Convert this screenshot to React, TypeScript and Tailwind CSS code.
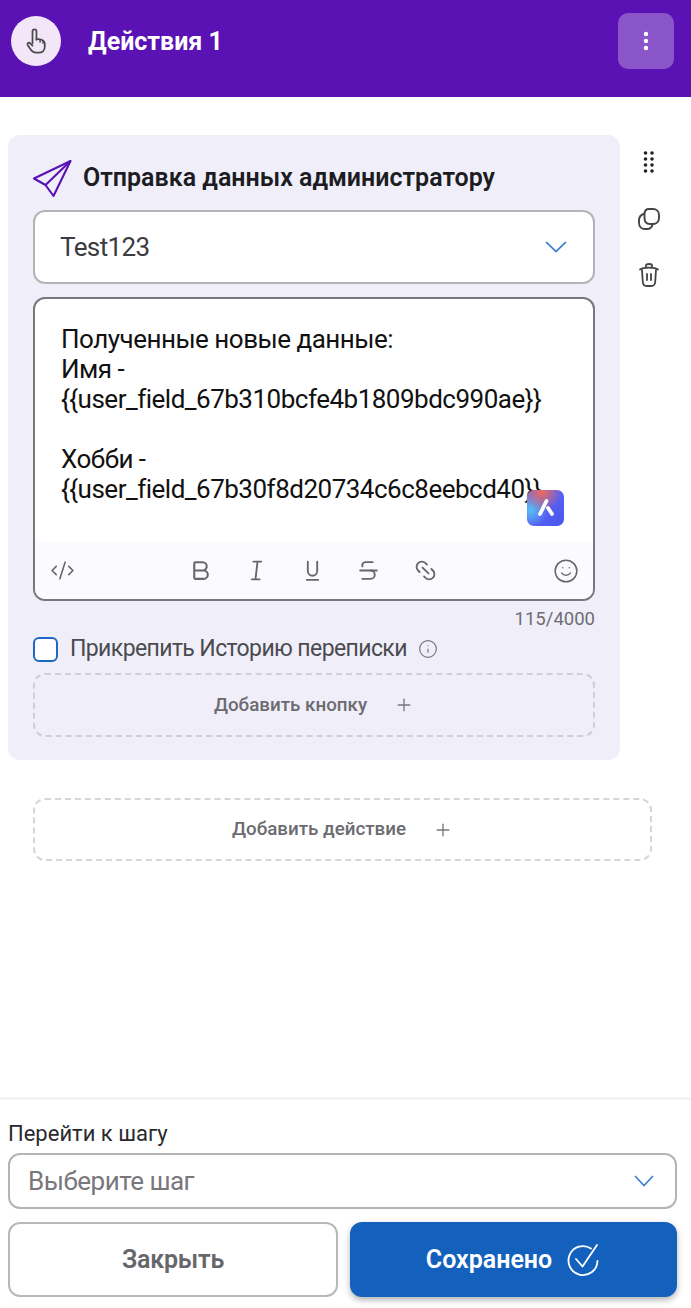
import React from 'react'
import { Plus, MoreVertical, CodeXml, Bold, Strikethrough, Link2, Smile, Info } from 'lucide-react'

function GripDots() {
    return (
        <svg width="14" height="24" viewBox="0 0 14 24" fill="#222">
            {[2, 8, 14, 20].map((y) => (
                <g key={y}>
                    <circle cx="3.5" cy={y} r="1.8" />
                    <circle cx="10" cy={y} r="1.8" />
                </g>
            ))}
        </svg>
    )
}

function Chevron({ width }: { width: number }) {
    return (
        <svg width={width} height="12" viewBox="0 0 20 12" fill="none" stroke="#3a7fd0" strokeWidth="1.7" preserveAspectRatio="none" className="ml-auto">
            <path d="M1 1 L10 10.5 L19 1" />
        </svg>
    )
}

function HandIcon() {
    return (
        <svg width="28" height="28" viewBox="0 0 24 24" fill="none" stroke="#4a4a4a" strokeWidth="1.5" strokeLinecap="round" strokeLinejoin="round">
            <path d="M9 14V3.7a1.7 1.7 0 0 1 3.4 0V11" />
            <path d="M12.4 10.5c2.5-.6 6.8.6 7.1 3.5v3c0 3-2 5-5 5h-2.2c-2.8 0-4.3-1.4-5.3-3.4L4.8 15.4c-.6-1.3 1-2.6 2.3-1.4L9 16" />
            <path d="M15.5 11v2M18 12v2" strokeWidth="1.2" />
        </svg>
    )
}

function PlaneIcon() {
    return (
        <svg width="40" height="40" viewBox="0 0 40 40" fill="none" stroke="#5a12b4" strokeWidth="2.1" strokeLinejoin="round" className="shrink-0 -ml-[1px]">
            <path d="M38.5 3 L2 20.5 L13.5 27 L21.5 38 Z" />
            <path d="M38.5 3 L13.5 27" />
        </svg>
    )
}

function CopyIcon() {
    return (
        <svg width="24" height="24" viewBox="0 0 24 24" fill="none" stroke="#444" strokeWidth="1.9" strokeLinejoin="round" className="mt-[32px]">
            <path d="M12 2h4c3.500 0 6 2.500 6 6v3c0 3.500-2.500 6-6 6h-3c-3.500 0-5.500-2.500-5.500-6V7c0-3 1.500-5 4.500-5z" />
            <path d="M7.600 6.500C4 7.500 2 10 2 13.500V16c0 3.500 2.500 6 6 6h2c2.800 0 5-1.600 5.800-5" />
        </svg>
    )
}

function TrashIcon() {
    return (
        <svg width="24" height="26" viewBox="0 0 24 26" fill="none" stroke="#444" strokeWidth="1.8" strokeLinecap="round" strokeLinejoin="round" className="mt-[31px]">
            <path d="M3 7.500c3-2.500 15-2.500 18 0" />
            <path d="M9 5V3.500c0-1 1-1.500 3-1.500s3 .5 3 1.500V5" />
            <path d="M5 8l.8 12c.2 2.500 1.700 4 4 4h4.400c2.300 0 3.800-1.500 4-4L19 8" />
            <path d="M10 12v6M14 12v6" />
        </svg>
    )
}

function ItalicIcon() {
    return (
        <svg width="25" height="25" viewBox="0 0 24 24" fill="none" stroke="#66666b" strokeWidth="1.800" strokeLinecap="round">
            <path d="M9 3.500h7.500M7.500 20.500H15M13 3.500l-2 17" />
        </svg>
    )
}

function UnderlineIcon() {
    return (
        <svg width="25" height="25" viewBox="0 0 24 24" fill="none" stroke="#66666b" strokeWidth="1.800" strokeLinecap="round">
            <path d="M7.500 3.500v9a4.500 4.500 0 0 0 9 0v-9M6.500 21h11" />
        </svg>
    )
}

function SavedIcon() {
    return (
        <svg width="36" height="36" viewBox="0 0 36 36" fill="none" stroke="#fff" strokeWidth="1.800" strokeLinecap="round" strokeLinejoin="round">
            <path d="M26 6.500A14.500 14.500 0 1 0 32.500 19" />
            <path d="M11 17l6.500 7.500L32 3" />
        </svg>
    )
}

function AiBadge() {
    return (
        <div className="absolute right-[29px] top-[191px] w-[37px] h-[36px] rounded-[7px] bg-[radial-gradient(circle_at_40%_5%,#ee6a5c_0%,transparent_48%),radial-gradient(circle_at_10%_55%,#55c0f8_0%,transparent_45%),linear-gradient(135deg,#6a6cf0,#4656f0)] flex items-center justify-center">
            <svg width="22" height="22" viewBox="0 0 22 22" fill="none" stroke="#fff" strokeWidth="3.800" strokeLinecap="round">
                <path d="M11.500 4 L5 17" />
                <path d="M13 11 L17 17" />
            </svg>
        </div>
    )
}

function AddRow({ label }: { label: string }) {
    return (
        <div className="flex items-center justify-center h-full gap-[27px] text-[18.8px] font-medium text-[#6b6b70]">
            <span>{label}</span>
            <Plus size={20} strokeWidth={1.6} className="text-[#77777c]" />
        </div>
    )
}

export default function App() {
    return (
        <div className="w-[691px] h-[1308px] bg-white flex flex-col overflow-hidden font-['Roboto',sans-serif]">
            <header className="h-[97px] shrink-0 bg-[#5a12b4] flex items-start pt-[13px] pl-[11px] pr-[17px]">
                <div className="w-[50px] h-[50px] mt-[3px] rounded-full bg-[#f3e6f9] flex items-center justify-center">
                    <HandIcon />
                </div>
                <h1 className="ml-[27px] mt-[13px] text-[25px] leading-[32px] font-bold text-white">Действия 1</h1>
                <button className="ml-auto w-[56px] h-[56px] rounded-[10px] bg-[#8a55c9] flex items-center justify-center">
                    <MoreVertical size={24} strokeWidth={2.4} className="text-white" />
                </button>
            </header>

            <main className="flex-1 pt-[38px] pl-[8px] pr-[14px]">
                <div className="flex">
                    <section className="w-[612px] h-[625px] shrink-0 bg-[#f0eff9] rounded-[12px] pt-[22px] px-[25px]">
                        <div className="flex items-center gap-[11px] h-[42px]">
                            <PlaneIcon />
                            <span className="text-[25px] font-semibold text-[#1c1c22]">Отправка данных администратору</span>
                        </div>
                        <div className="mt-[11px] h-[74px] rounded-[12px] border-2 border-[#b4b4b8] bg-white flex items-center pl-[25px] pr-[26px]">
                            <span className="text-[26px] tracking-[-0.6px] text-[#3b3b40]">Test123</span>
                            <Chevron width={22} />
                        </div>
                        <div className="relative mt-[13px] h-[304px] rounded-[12px] border-2 border-[#77777c] bg-white overflow-hidden flex flex-col">
                            <div className="flex-1 pt-[25px] pl-[26px] text-[26px] leading-[30px] tracking-[-0.5px] text-[#111]">
                                <p>Полученные новые данные:</p>
                                <p>Имя -</p>
                                <p>{'{{user_field_67b310bcfe4b1809bdc990ae}}'}</p>
                                <p className="h-[30px]" />
                                <p>Хобби -</p>
                                <p>{'{{user_field_67b30f8d20734c6c8eebcd40}}'}</p>
                            </div>
                            <AiBadge />
                            <div className="h-[57px] bg-[#fbfaff] flex items-center pl-[15px] pr-[14px] text-[#66666b]">
                                <CodeXml size={25} strokeWidth={1.5} />
                                <div className="flex items-center gap-[31px] ml-[113px]">
                                    <Bold size={25} strokeWidth={2} />
                                    <ItalicIcon />
                                    <UnderlineIcon />
                                    <Strikethrough size={25} strokeWidth={1.8} />
                                    <Link2 size={25} strokeWidth={1.8} className="rotate-45 ml-[1px]" />
                                </div>
                                <Smile size={26} strokeWidth={1.4} className="ml-auto" />
                            </div>
                        </div>
                        <div className="mt-[6px] text-right text-[18.5px] leading-[24px] text-[#6d6d72]">115/4000</div>
                        <div className="mt-[4px] flex items-center h-[28px]">
                            <div className="w-[25px] h-[25px] rounded-[6px] border-2 border-[#1e68c4] bg-white" />
                            <span className="ml-[12px] text-[23px] tracking-[-0.6px] text-[#4a4a4f]">Прикрепить Историю переписки</span>
                            <Info size={20} strokeWidth={1.4} className="ml-[11px] text-[#77777c]" />
                        </div>
                        <div className="mt-[10px] h-[64px] rounded-[12px] border-2 border-dashed border-[#cfcfd6]">
                            <AddRow label="Добавить кнопку" />
                        </div>
                    </section>
                    <aside className="flex-1 flex flex-col items-center pt-[16px] text-[#333]">
                        <GripDots />
                        <CopyIcon />
                        <TrashIcon />
                    </aside>
                </div>
                <div className="mt-[38px] ml-[25px] w-[619px] h-[63px] rounded-[12px] border-2 border-dashed border-[#d6d6da]">
                    <AddRow label="Добавить действие" />
                </div>
            </main>

            <footer className="h-[211px] shrink-0 border-t-[3px] border-[#f3f3f4] pl-[8px] pr-[14px] pt-[19px]">
                <label className="block text-[22px] leading-[30px] text-[#2a2a2e]">Перейти к шагу</label>
                <div className="mt-[4px] h-[56px] rounded-[12px] border-2 border-[#b4b4b8] bg-white flex items-center pl-[18px] pr-[21px]">
                    <span className="text-[26px] tracking-[-0.5px] text-[#77777c]">Выберите шаг</span>
                    <Chevron width={20} />
                </div>
                <div className="mt-[13px] flex gap-[12px]">
                    <button className="w-[330px] h-[75px] rounded-[12px] border-2 border-[#b8b8bc] bg-white text-[25px] tracking-[-0.2px] font-semibold text-[#66666b]">Закрыть</button>
                    <button className="flex-1 h-[75px] rounded-[12px] bg-[#1461bd] shadow-[0_3px_6px_rgba(0,0,0,0.3)] flex items-center justify-center gap-[13px] text-[25px] font-semibold text-white">
                        <span>Сохранено</span>
                        <SavedIcon />
                    </button>
                </div>
            </footer>
        </div>
    )
}
